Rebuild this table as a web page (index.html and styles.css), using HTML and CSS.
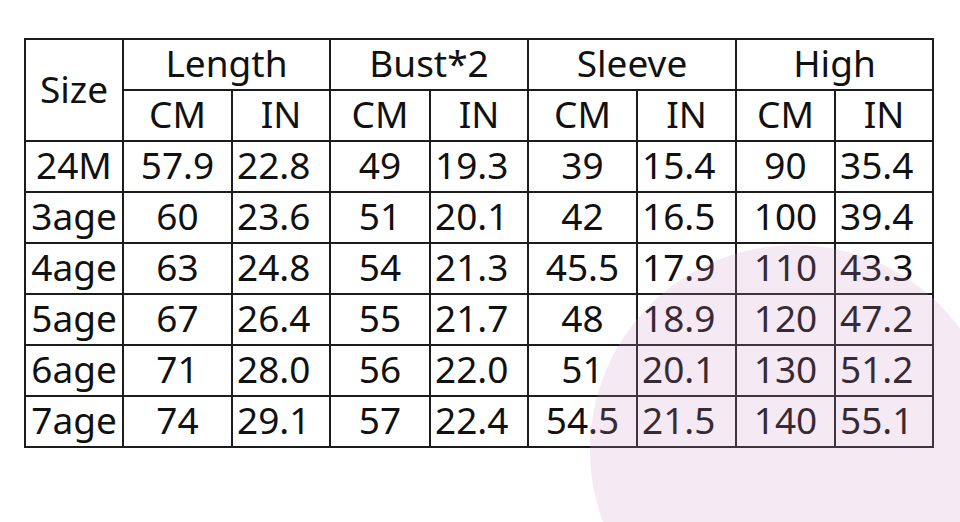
FILE: index.html
```html
<!DOCTYPE html>
<html>
<head>
<meta charset="utf-8">
<link rel="stylesheet" href="styles.css">
</head>
<body>
<div class="sheet">
  <table class="size-table">
    <colgroup>
      <col class="c-size">
      <col class="c-w109"><col class="c-w98">
      <col class="c-w100"><col class="c-w98">
      <col class="c-w109"><col class="c-w99">
      <col class="c-w99"><col class="c-w98">
    </colgroup>
    <thead>
      <tr>
        <th rowspan="2">Size</th>
        <th colspan="2">Length</th>
        <th colspan="2">Bust*2</th>
        <th colspan="2">Sleeve</th>
        <th colspan="2">High</th>
      </tr>
      <tr>
        <th>CM</th><th>IN</th>
        <th>CM</th><th>IN</th>
        <th>CM</th><th>IN</th>
        <th>CM</th><th>IN</th>
      </tr>
    </thead>
    <tbody>
      <tr><td>24M</td><td>57.9</td><td class="in">22.8</td><td>49</td><td class="in">19.3</td><td>39</td><td class="in">15.4</td><td>90</td><td class="in">35.4</td></tr>
      <tr><td>3age</td><td>60</td><td class="in">23.6</td><td>51</td><td class="in">20.1</td><td>42</td><td class="in">16.5</td><td>100</td><td class="in">39.4</td></tr>
      <tr><td>4age</td><td>63</td><td class="in">24.8</td><td>54</td><td class="in">21.3</td><td>45.5</td><td class="in">17.9</td><td>110</td><td class="in">43.3</td></tr>
      <tr><td>5age</td><td>67</td><td class="in">26.4</td><td>55</td><td class="in">21.7</td><td>48</td><td class="in">18.9</td><td>120</td><td class="in">47.2</td></tr>
      <tr><td>6age</td><td>71</td><td class="in">28.0</td><td>56</td><td class="in">22.0</td><td>51</td><td class="in">20.1</td><td>130</td><td class="in">51.2</td></tr>
      <tr><td>7age</td><td>74</td><td class="in">29.1</td><td>57</td><td class="in">22.4</td><td>54.5</td><td class="in">21.5</td><td>140</td><td class="in">55.1</td></tr>
    </tbody>
  </table>
  <div class="blob"></div>
</div>
</body>
</html>
```
FILE: styles.css
```css
html, body {
  margin: 0;
  padding: 0;
  background: #ffffff;
}
.sheet {
  position: relative;
  width: 960px;
  height: 522px;
  overflow: hidden;
  padding: 38px 0 0 24px;
  box-sizing: border-box;
}
.size-table {
  border-collapse: collapse;
  table-layout: fixed;
  font-family: "Noto Sans", "Open Sans", sans-serif;
  font-size: 37px;
  color: #111111;
}
.c-size { width: 98px; }
.c-w109 { width: 109px; }
.c-w98 { width: 98px; }
.c-w99 { width: 99px; }
.c-w100 { width: 100px; }
.size-table th,
.size-table td {
  border: 2px solid #1c1c1c;
  height: 45px;
  padding: 0 0 4px 0;
  text-align: center;
  vertical-align: middle;
  font-weight: normal;
  line-height: 1;
  white-space: nowrap;
  overflow: visible;
}
.size-table td.in {
  text-align: left;
  padding-left: 4px;
}
.blob {
  position: absolute;
  left: 590px;
  top: 245px;
  width: 410px;
  height: 410px;
  border-radius: 50%;
  background: rgba(206, 147, 201, 0.2);
  pointer-events: none;
}
```
